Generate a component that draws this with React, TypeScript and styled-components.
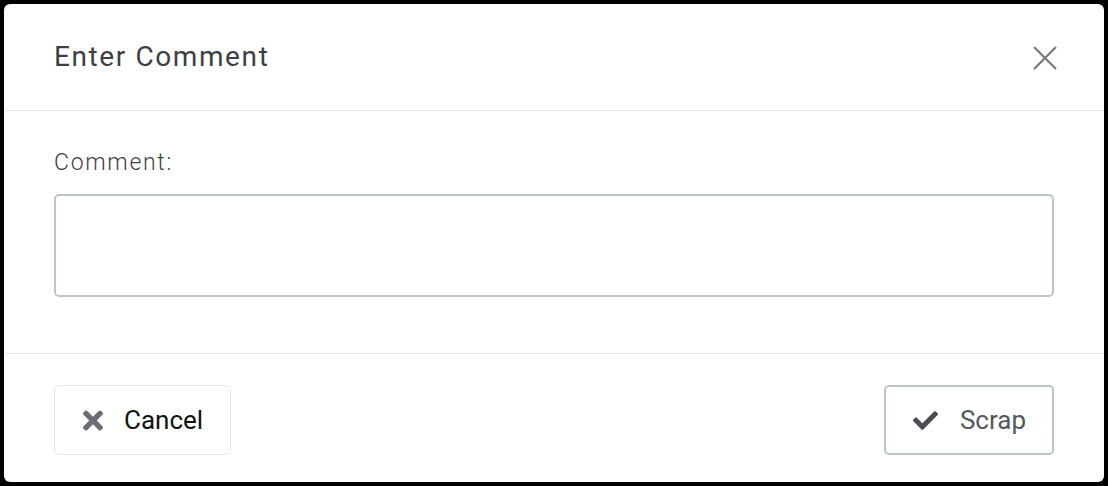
import * as React from "react";
import styled, { createGlobalStyle } from "styled-components";
import { FaTimes, FaCheck } from "react-icons/fa";

const GlobalStyle = createGlobalStyle`
  html, body {
    margin: 0;
    padding: 0;
    background: #000000;
  }
  body {
    font-family: Roboto, "Liberation Sans", Arial, sans-serif;
  }
`;

const Backdrop = styled.div`
  width: 1108px;
  height: 486px;
  padding: 4px;
  box-sizing: border-box;
`;

const Modal = styled.div`
  width: 100%;
  height: 100%;
  background: #ffffff;
  border-radius: 6px;
  display: flex;
  flex-direction: column;
  overflow: hidden;
`;

const Header = styled.div`
  height: 106px;
  flex-shrink: 0;
  display: flex;
  align-items: center;
  justify-content: space-between;
  padding: 0 47px 0 50px;
  border-bottom: 1px solid #e4e7ea;
`;

const Title = styled.h4`
  margin: 0;
  font-size: 28px;
  font-weight: 400;
  line-height: 32px;
  letter-spacing: 1.6px;
  color: #3d3f46;
`;

const CloseButton = styled.button`
  width: 24px;
  height: 24px;
  padding: 0;
  border: 0;
  background: transparent;
  cursor: pointer;
  display: flex;
  margin-top: 2px;
`;

const Body = styled.div`
  flex: 1;
  padding: 39px 50px 0 50px;
  border-bottom: 1px solid #e4e7ea;
`;

const Label = styled.label`
  display: block;
  font-size: 23px;
  line-height: 26px;
  font-weight: 300;
  letter-spacing: 1.7px;
  color: #3f4147;
  margin-bottom: 18px;
`;

const TextArea = styled.textarea`
  display: block;
  width: 100%;
  height: 103px;
  box-sizing: border-box;
  border: 2px solid #bac5c5;
  border-radius: 5px;
  resize: none;
  outline: none;
  font-family: inherit;
  font-size: 22px;
  padding: 8px 12px;
`;

const Footer = styled.div`
  height: 128px;
  flex-shrink: 0;
  box-sizing: border-box;
  display: flex;
  align-items: flex-start;
  justify-content: space-between;
  padding: 31px 50px 0 50px;
`;

interface ButtonProps {
  $outline?: boolean;
}

const Button = styled.button<ButtonProps>`
  height: 70px;
  box-sizing: border-box;
  display: flex;
  align-items: center;
  gap: ${props => (props.$outline ? "22px" : "21px")};
  padding: ${props => (props.$outline ? "0 26px 0 27px" : "0 27px 0 28px")};
  background: #ffffff;
  border: ${props => (props.$outline ? "2px solid #b9c4c4" : "1px solid #e3e5e9")};
  border-radius: 5px;
  font-family: inherit;
  font-size: 26px;
  color: ${props => (props.$outline ? "#54575e" : "#111111")};
  cursor: pointer;
`;

interface IconProps {
  color: string;
  $w: number;
  $h: number;
}

const IconWrap = styled.span<IconProps>`
  display: flex;
  color: ${props => props.color};
  svg {
    width: ${props => props.$w}px;
    height: ${props => props.$h}px;
  }
`;

export default function App() {
  return (
    <>
      <GlobalStyle />
      <Backdrop>
        <Modal>
          <Header>
            <Title>Enter Comment</Title>
            <CloseButton aria-label="Close">
              <svg width="24" height="24" viewBox="0 0 24 24">
                <path
                  d="M1 1 L23 23 M23 1 L1 23"
                  stroke="#7a7a7a"
                  strokeWidth="2.2"
                  fill="none"
                />
              </svg>
            </CloseButton>
          </Header>
          <Body>
            <Label htmlFor="comment">Comment:</Label>
            <TextArea id="comment" />
          </Body>
          <Footer>
            <Button>
              <IconWrap color="#6b6c75" $w={20} $h={29}>
                <FaTimes />
              </IconWrap>
              Cancel
            </Button>
            <Button $outline>
              <IconWrap color="#4a4b55" $w={25} $h={25}>
                <FaCheck />
              </IconWrap>
              Scrap
            </Button>
          </Footer>
        </Modal>
      </Backdrop>
    </>
  );
}
